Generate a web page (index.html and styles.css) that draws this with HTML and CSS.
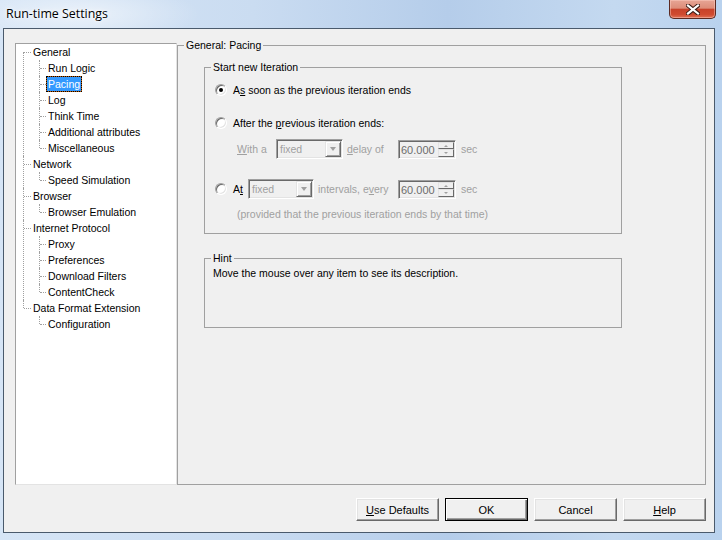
FILE: index.html
```html
<!DOCTYPE html>
<html lang="en">
<head>
    <meta charset="UTF-8">
    <title>Run-time Settings</title>
    <link rel="stylesheet" href="styles.css">
</head>
<body>
<div class="window">
    <!-- Title bar -->
    <div class="titlebar">
        <span class="title">Run-time Settings</span>
        <button class="close-btn" title="Close">
            <svg width="14" height="11" viewBox="0 0 14 11">
                <path d="M2 1.5 L12 9.5 M12 1.5 L2 9.5" stroke="#3a1a14" stroke-width="4.2" stroke-linecap="square"/>
                <path d="M2 1.5 L12 9.5 M12 1.5 L2 9.5" stroke="#ffffff" stroke-width="2.2" stroke-linecap="square"/>
            </svg>
        </button>
    </div>

    <div class="client">
        <div class="main">
            <!-- Settings tree -->
            <div class="tree">
                <ul class="tree-root">
                    <li><span class="node">General</span>
                        <ul>
                            <li><span class="node">Run Logic</span></li>
                            <li><span class="node selected">Pacing</span></li>
                            <li><span class="node">Log</span></li>
                            <li><span class="node">Think Time</span></li>
                            <li><span class="node">Additional attributes</span></li>
                            <li><span class="node">Miscellaneous</span></li>
                        </ul>
                    </li>
                    <li><span class="node">Network</span>
                        <ul>
                            <li><span class="node">Speed Simulation</span></li>
                        </ul>
                    </li>
                    <li><span class="node">Browser</span>
                        <ul>
                            <li><span class="node">Browser Emulation</span></li>
                        </ul>
                    </li>
                    <li><span class="node">Internet Protocol</span>
                        <ul>
                            <li><span class="node">Proxy</span></li>
                            <li><span class="node">Preferences</span></li>
                            <li><span class="node">Download Filters</span></li>
                            <li><span class="node">ContentCheck</span></li>
                        </ul>
                    </li>
                    <li><span class="node">Data Format Extension</span>
                        <ul>
                            <li><span class="node">Configuration</span></li>
                        </ul>
                    </li>
                </ul>
            </div>

            <!-- Settings page -->
            <fieldset class="page">
                <legend>General: Pacing</legend>

                <fieldset class="group iteration">
                    <legend>Start new Iteration</legend>

                    <div class="row row-first">
                        <span class="radio checked"></span>
                        <span class="opt-label">A<u>s</u> soon as the previous iteration ends</span>
                    </div>

                    <div class="row row-second">
                        <span class="radio"></span>
                        <span class="opt-label">After the <u>p</u>revious iteration ends:</span>
                    </div>

                    <div class="row ctl-row row-delay">
                        <span class="dim lbl-with"><u>W</u>ith a</span>
                        <span class="combo combo-delay"><span class="combo-text">fixed</span><span class="drop-btn"></span></span>
                        <span class="dim lbl-delay"><u>d</u>elay of</span>
                        <span class="spin"><span class="spin-text">60.000</span><span class="spin-btns"><span class="spin-up"></span><span class="spin-down"></span></span></span>
                        <span class="dim lbl-sec">sec</span>
                    </div>

                    <div class="row ctl-row row-interval">
                        <span class="radio"></span>
                        <span class="opt-label lbl-at">A<u>t</u></span>
                        <span class="combo combo-interval"><span class="combo-text">fixed</span><span class="drop-btn"></span></span>
                        <span class="dim lbl-every">intervals, e<u>v</u>ery</span>
                        <span class="spin"><span class="spin-text">60.000</span><span class="spin-btns"><span class="spin-up"></span><span class="spin-down"></span></span></span>
                        <span class="dim lbl-sec">sec</span>
                    </div>

                    <div class="row row-note">
                        <span class="dim">(provided that the previous iteration ends by that time)</span>
                    </div>
                </fieldset>

                <fieldset class="group hint">
                    <legend>Hint</legend>
                    <p class="hint-text">Move the mouse over any item to see its description.</p>
                </fieldset>
            </fieldset>
        </div>

        <!-- Dialog buttons -->
        <div class="buttons">
            <button class="btn"><u>U</u>se Defaults</button>
            <button class="btn btn-default">OK</button>
            <button class="btn">Cancel</button>
            <button class="btn"><u>H</u>elp</button>
        </div>
    </div>
</div>
</body>
</html>
```

FILE: styles.css
```css
html, body {
    margin: 0;
    padding: 0;
}

body {
    width: 722px;
    height: 540px;
    overflow: hidden;
    font-family: "Liberation Sans", Arial, sans-serif;
    font-size: 10.5px;
    color: #000;
}

u {
    text-decoration: underline;
    text-underline-offset: 1px;
}

/* window frame */
.window {
    width: 722px;
    height: 540px;
    display: flex;
    flex-direction: column;
    background:
        radial-gradient(ellipse 120px 30px at 80px 14px, rgba(255,255,255,0.55), rgba(255,255,255,0) 100%),
        linear-gradient(to right, #d6e5f6 0%, #cadcf1 35%, #b5cdea 62%, #c4d9f0 85%, #b9d2ee 100%);
}

.titlebar {
    height: 28px;
    display: flex;
    align-items: flex-start;
    flex-shrink: 0;
}

.title {
    margin: 6px 0 0 6px;
    font-family: "Open Sans", "Noto Sans", sans-serif;
    font-size: 12.4px;
    line-height: 16px;
    color: #000;
    text-shadow: 0 0 6px #fff, 0 0 3px #fff;
}

.close-btn {
    margin: 0 6px 0 auto;
    width: 47px;
    height: 19px;
    padding: 0;
    border: 1px solid #5c2a22;
    border-top: none;
    border-radius: 0 0 5px 5px;
    background: linear-gradient(#e7a595 0%, #dd8d79 45%, #c8432b 52%, #cf4a30 80%, #e07055 100%);
    box-shadow: inset 0 0 0 1px rgba(255,210,200,0.45);
    display: flex;
    align-items: center;
    justify-content: center;
}

.client {
    flex: 1;
    margin: 0 7px 7px 3px;
    border: 1px solid #4a5a6c;
    background: #f0f0f0;
    padding: 9px 8px 0 11px;
    display: flex;
    flex-direction: column;
}

.main {
    display: flex;
    height: 447px;
}

/* tree view */
.tree {
    margin-top: 5px;
    width: 162px;
    flex-shrink: 0;
    box-sizing: border-box;
    background: #fff;
    border-top: 1px solid #a0a0a0;
    border-left: 1px solid #a0a0a0;
    border-right: 1px solid #e3e3e3;
    border-bottom: 1px solid #e3e3e3;
}

.tree ul {
    list-style: none;
    margin: 0;
    padding: 0;
}

.tree-root {
    margin-left: 7px !important;
}

.tree li {
    position: relative;
    padding-left: 8px;
}

.tree li ul {
    margin-left: 8px;
}

.tree li ul li {
    padding-left: 7px;
}

/* dotted connector lines */
.tree li::before {
    content: "";
    position: absolute;
    left: 0;
    top: 0;
    bottom: 0;
    border-left: 1px dotted #a0a0a0;
}

.tree li:last-child::before {
    bottom: auto;
    height: 8px;
}

.tree-root > li:first-child::before {
    top: 8px;
}

.tree li::after {
    content: "";
    position: absolute;
    left: 1px;
    top: 8px;
    width: 7px;
    border-top: 1px dotted #a0a0a0;
}

.tree li ul li::after {
    width: 6px;
}

.node {
    display: inline-block;
    height: 16px;
    line-height: 16px;
    padding: 0 2px;
    box-sizing: border-box;
    white-space: nowrap;
}

.node.selected {
    color: #fff;
    border: 1px dotted #000;
    line-height: 14px;
    padding: 0 1px;
    background: linear-gradient(#3399ff, #3399ff) padding-box, linear-gradient(#b85e10, #b85e10) border-box;
}

/* property page */
fieldset {
    margin: 0;
    padding: 0;
    min-width: 0;
}

legend {
    padding: 0 2px;
    margin-left: 6px;
    line-height: 14px;
}

.page {
    flex: 1;
    border: 1px solid #a0a0a0;
}

.group {
    width: 418px;
    box-sizing: border-box;
    margin-left: 26px;
    border: 1px solid #a0a0a0;
}

.group legend {
    margin-left: 6px;
}

.iteration {
    margin-top: 8px;
    padding-bottom: 12px;
}

.row {
    display: flex;
    align-items: center;
    height: 16px;
    padding-left: 10px;
    white-space: nowrap;
}

.ctl-row {
    height: 20px;
}

.row-first {
    margin-top: 8px;
}

.row-second {
    margin-top: 17px;
}

.row-delay {
    margin-top: 8px;
    padding-left: 32px;
}

.row-interval {
    margin-top: 20px;
}

.row-note {
    margin-top: 8px;
    height: 14px;
    padding-left: 32px;
}

.dim {
    color: #a0a0a0;
}

.radio {
    position: relative;
    width: 12px;
    height: 12px;
    box-sizing: border-box;
    border-radius: 50%;
    border: 1px solid;
    border-color: #a0a0a0 #ffffff #ffffff #a0a0a0;
    box-shadow: inset 1px 1px 0 #696969, inset -1px -1px 0 #e3e3e3;
    background: #fff;
    flex-shrink: 0;
}

.radio.checked::after {
    content: "";
    position: absolute;
    left: 3px;
    top: 3px;
    width: 4px;
    height: 4px;
    border-radius: 50%;
    background: #000;
}

.opt-label {
    margin-left: 6px;
}

.lbl-with {
    width: 39px;
}

.lbl-at {
    width: 15px;
}

.lbl-delay {
    margin-left: 4px;
    width: 51px;
}

.lbl-every {
    margin-left: 4px;
    width: 80px;
}

.lbl-sec {
    margin-left: 5px;
}

/* combo box */
.combo {
    display: flex;
    align-items: center;
    height: 20px;
    box-sizing: border-box;
    border: 1px solid;
    border-color: #a0a0a0 #ffffff #ffffff #a0a0a0;
    box-shadow: inset 1px 1px 0 #696969, inset -1px -1px 0 #e3e3e3;
    background: #f0f0f0;
    color: #a0a0a0;
}

.combo-delay {
    width: 67px;
}

.combo-interval {
    width: 66px;
}

.combo-text {
    flex: 1;
    padding-left: 3px;
}

.drop-btn {
    position: relative;
    width: 16px;
    height: 16px;
    margin-right: 1px;
    box-sizing: border-box;
    border: 1px solid;
    border-color: #e3e3e3 #696969 #696969 #e3e3e3;
    box-shadow: inset 1px 1px 0 #fff, inset -1px -1px 0 #a0a0a0;
    background: #f0f0f0;
}

.drop-btn::after {
    content: "";
    position: absolute;
    left: 4px;
    top: 5px;
    border-left: 3.5px solid transparent;
    border-right: 3.5px solid transparent;
    border-top: 4px solid #a0a0a0;
}

/* spin box */
.spin {
    display: flex;
    width: 58px;
    height: 19px;
    box-sizing: border-box;
    border: 1px solid;
    border-color: #a0a0a0 #ffffff #ffffff #a0a0a0;
    box-shadow: inset 1px 1px 0 #696969, inset -1px -1px 0 #e3e3e3;
    background: #f0f0f0;
}

.spin-text {
    flex: 1;
    padding: 2px 0 0 2px;
    line-height: 14px;
    font-size: 11px;
    color: #6d6d6d;
}

.spin-btns {
    display: flex;
    flex-direction: column;
    width: 16px;
    margin: 1px 1px 1px 0;
}

.spin-up,
.spin-down {
    position: relative;
    flex: 1;
    box-sizing: border-box;
    border: 1px solid;
    border-color: #e3e3e3 #696969 #696969 #e3e3e3;
    background: #f0f0f0;
}

.spin-up::after,
.spin-down::after {
    content: "";
    position: absolute;
    left: 5px;
    top: 2px;
    border-left: 2px solid transparent;
    border-right: 2px solid transparent;
}

.spin-up::after {
    border-bottom: 2px solid #a0a0a0;
}

.spin-down::after {
    border-top: 2px solid #a0a0a0;
}

/* hint box */
.hint {
    margin-top: 17px;
    padding-bottom: 47px;
}

.hint-text {
    margin: 1px 0 0 8px;
    line-height: 14px;
}

/* dialog buttons */
.buttons {
    display: flex;
    justify-content: flex-end;
    gap: 6px;
    margin-top: 13px;
}

.btn {
    width: 83px;
    height: 23px;
    padding: 0;
    font-family: "Liberation Sans", Arial, sans-serif;
    font-size: 11px;
    color: #000;
    background: #f0f0f0;
    border: 1px solid;
    border-color: #ffffff #696969 #696969 #ffffff;
    box-shadow: inset -1px -1px 0 #a0a0a0, inset 1px 1px 0 #e3e3e3;
}

.btn-default {
    border: 1px solid #000;
    box-shadow: inset 1px 1px 0 #fff, inset -1px -1px 0 #696969, inset -2px -2px 0 #a0a0a0;
}
```
